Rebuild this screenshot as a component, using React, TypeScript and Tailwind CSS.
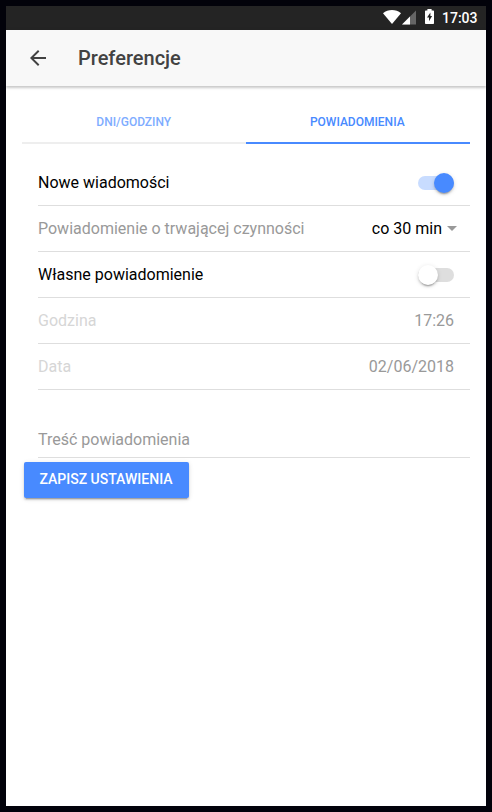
import type { ReactNode } from 'react';

function StatusBar() {
  return (
    <div className="flex h-6 shrink-0 items-center justify-end bg-[#242424] pr-[8.5px] text-white">
      <svg width="18" height="14" viewBox="0 0 18 14" className="mr-px mb-[2px]" fill="currentColor">
        <path d="M0 3.2C5-1 13-1 18 3.2L9 14Z" />
      </svg>
      <svg width="14" height="15" viewBox="0 0 14 15" className="mr-[8.5px] mb-px">
        <path d="M0 14.5L14 .5V14.5Z" fill="#666" />
        <path d="M0 14.5L8 6.5V14.5Z" fill="#fff" />
      </svg>
      <svg width="9" height="15" viewBox="0 0 9 15" className="mr-[8px] mb-[3px]">
        <path d="M0 2.2Q0 1.4.8 1.4H2.4V0H6.6V1.4H8.2Q9 1.4 9 2.2V14.2Q9 15 8.2 15H.8Q0 15 0 14.2Z" fill="#fff" />
        <path d="M5.4 3.4L2 8.4H4V12.2L7.1 7H5.4Z" fill="#242424" />
      </svg>
      <span className="text-[14px] leading-6 font-medium">17:03</span>
    </div>
  );
}

function Header() {
  return (
    <header className="relative z-10 flex h-14 shrink-0 items-center bg-[#f8f8f8] text-[#424242] shadow-[0_2px_2px_0_rgba(0,0,0,0.14),0_1px_4px_0_rgba(0,0,0,0.12)]">
      <svg width="16" height="16" viewBox="0 0 16 16" className="ml-6" fill="currentColor">
        <path d="M16 7H3.8L9.4 1.4L8 0L0 8L8 16L9.4 14.6L3.8 9H16Z" />
      </svg>
      <h1 className="ml-8 text-[20px] leading-6 font-medium">Preferencje</h1>
    </header>
  );
}

function Row({ label, labelClass, children }: { label: string; labelClass: string; children: ReactNode }) {
  return (
    <div className="flex h-[46px] items-center justify-between border-b border-[#dedede] pr-4">
      <span className={labelClass}>{label}</span>
      {children}
    </div>
  );
}

function Toggle({ on }: { on: boolean }) {
  return (
    <span className={`flex h-3.5 w-9 items-center rounded-full ${on ? 'justify-end bg-[#c8dcff]' : 'bg-[#dedede]'}`}>
      <span
        className={`h-5 w-5 rounded-full shadow-[0_2px_2px_0_rgba(0,0,0,0.14),0_3px_1px_-2px_rgba(0,0,0,0.2),0_1px_5px_0_rgba(0,0,0,0.12)] ${on ? 'bg-[#488aff]' : 'bg-white'}`}
      />
    </span>
  );
}

export default function App() {
  return (
    <div className="h-[812px] w-[492px] bg-[#02020a] p-1.5 font-[Roboto,sans-serif]">
      <div className="flex h-full flex-col overflow-hidden bg-white">
        <StatusBar />
        <Header />
        <main className="flex flex-col px-4 pt-4 text-[16px] leading-5">
          <nav className="flex h-[42px] text-[12px] font-medium text-[#488aff]">
            <div className="flex flex-1 items-center justify-center border-b-2 border-[#eeeeee]">
              <span className="opacity-70">DNI/GODZINY</span>
            </div>
            <div className="flex flex-1 items-center justify-center border-b-2 border-[#488aff] pr-px">POWIADOMIENIA</div>
          </nav>
          <section className="mt-4 pl-4">
            <Row label="Nowe wiadomości" labelClass="text-black">
              <Toggle on />
            </Row>
            <Row label="Powiadomienie o trwającej czynności" labelClass="text-[#999999]">
              <span className="-mr-[3px] flex items-center gap-[5px] text-black">
                co 30 min
                <span className="border-x-5 border-t-5 border-x-transparent border-t-[#999999]" />
              </span>
            </Row>
            <Row label="Własne powiadomienie" labelClass="text-black">
              <Toggle on={false} />
            </Row>
            <Row label="Godzina" labelClass="text-[#d6d6d6]">
              <span className="text-[#999999]">17:26</span>
            </Row>
            <Row label="Data" labelClass="text-[#d6d6d6]">
              <span className="text-[#999999]">02/06/2018</span>
            </Row>
            <div className="flex h-[68px] items-end border-b border-[#dedede] pb-[7px] text-[#999999]">Treść powiadomienia</div>
          </section>
          <button className="mt-1 ml-0.5 h-9 w-[165px] rounded-[2px] bg-[#488aff] pr-px pb-[2px] text-[14px] font-medium whitespace-nowrap text-white shadow-[0_2px_2px_0_rgba(0,0,0,0.14),0_3px_1px_-2px_rgba(0,0,0,0.2),0_1px_5px_0_rgba(0,0,0,0.12)]">
            ZAPISZ USTAWIENIA
          </button>
        </main>
      </div>
    </div>
  );
}
